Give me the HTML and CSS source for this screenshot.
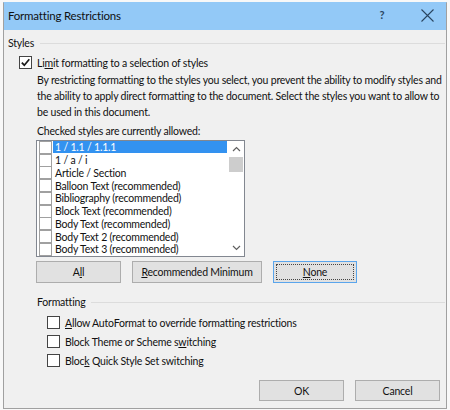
FILE: index.html
```html
<!DOCTYPE html>
<html lang="en">
<head>
  <meta charset="UTF-8">
  <title>Formatting Restrictions</title>
  <link rel="stylesheet" href="styles.css">
</head>
<body>

  <div class="window">
    <div class="titlebar">
      <span class="title">Formatting Restrictions</span>
      <span class="help">?</span>
      <span class="close">
        <svg width="13" height="13" viewBox="0 0 13 13"><path d="M0.5 0.5 L12.5 12.5 M12.5 0.5 L0.5 12.5" stroke="#2a4560" stroke-width="1.1" fill="none"/></svg>
      </span>
    </div>

    <div class="content">
      <div class="group-head">Styles</div>

      <label class="check-row limit">
        <span class="box">
          <svg width="11" height="11" viewBox="0 0 11 11"><path d="M1.8 5.6 L4.3 8.2 L9.3 2.2" stroke="#1a1a1a" stroke-width="1.7" fill="none"/></svg>
        </span>
        <span>Li<u>m</u>it formatting to a selection of styles</span>
      </label>

      <p class="desc">By restricting formatting to the styles you select, you prevent the ability to modify styles and
        the ability to apply direct formatting to the document. Select the styles you want to allow to
        be used in this document.</p>

      <div class="list-label">Checked styles are currently allowed:</div>

      <div class="listbox">
        <div class="rows">
          <div class="row selected"><span class="box"></span><span class="name">1 / 1.1 / 1.1.1</span></div>
          <div class="row"><span class="box"></span><span class="name">1 / a / i</span></div>
          <div class="row"><span class="box"></span><span class="name">Article / Section</span></div>
          <div class="row"><span class="box"></span><span class="name">Balloon Text (recommended)</span></div>
          <div class="row"><span class="box"></span><span class="name">Bibliography (recommended)</span></div>
          <div class="row"><span class="box"></span><span class="name">Block Text (recommended)</span></div>
          <div class="row"><span class="box"></span><span class="name">Body Text (recommended)</span></div>
          <div class="row"><span class="box"></span><span class="name">Body Text 2 (recommended)</span></div>
          <div class="row"><span class="box"></span><span class="name">Body Text 3 (recommended)</span></div>
        </div>
        <div class="scrollbar">
          <div class="arrow-btn">
            <svg width="9" height="6" viewBox="0 0 9 6"><path d="M1 5 L4.5 1.5 L8 5" stroke="#606060" stroke-width="1.2" fill="none"/></svg>
          </div>
          <div class="thumb"></div>
          <div class="track"></div>
          <div class="arrow-btn">
            <svg width="9" height="6" viewBox="0 0 9 6"><path d="M1 1 L4.5 4.5 L8 1" stroke="#606060" stroke-width="1.2" fill="none"/></svg>
          </div>
        </div>
      </div>

      <div class="list-buttons">
        <button class="btn all">A<u>l</u>l</button>
        <button class="btn rec"><u>R</u>ecommended Minimum</button>
        <button class="btn none"><span class="focus"><u>N</u>one</span></button>
      </div>

      <div class="group-head sub">Formatting</div>

      <div class="options">
        <label class="check-row"><span class="box"></span><span><u>A</u>llow AutoFormat to override formatting restrictions</span></label>
        <label class="check-row"><span class="box"></span><span>Block Theme or Scheme s<u>w</u>itching</span></label>
        <label class="check-row"><span class="box"></span><span>Bloc<u>k</u> Quick Style Set switching</span></label>
      </div>

      <div class="footer">
        <button class="btn big">OK</button>
        <button class="btn big">Cancel</button>
      </div>
    </div>
  </div>

</body>
</html>
```

FILE: styles.css
```css
:root {
  --title-blue: #93c9f7;
  --dialog-bg: #f0f0f0;
  --btn-bg: #e1e1e1;
  --btn-border: #adadad;
  --line: #dcdcdc;
  --text: #111;
  --select: #3392f0;
}

body {
  margin: 0;
  background: #f8f8f8;
  font-family: 'Lato', 'Noto Sans', sans-serif;
  font-size: 10.5px;
  letter-spacing: -0.2px;
  line-height: 14px;
  color: var(--text);
}

u {
  text-underline-offset: 1px;
}

.window {
  margin: 2px 0 0 3px;
  width: 442px;
  height: 405px;
  border: 1px solid #a0a0a0;
  border-top-color: var(--title-blue);
  background: var(--dialog-bg);
  display: flex;
  flex-direction: column;
}

.titlebar {
  flex: none;
  height: 27px;
  background: var(--title-blue);
  display: flex;
  align-items: center;
  padding-left: 4px;
}
.title {
  flex: 1;
  font-size: 11.5px;
  padding-bottom: 1px;
  color: #101010;
}
.help {
  width: 52px;
  text-align: center;
  font-weight: bold;
  font-size: 11px;
  color: #2a4560;
  padding-bottom: 3px;
}
.close {
  width: 38px;
  display: flex;
  justify-content: center;
  padding-bottom: 3px;
}

.content {
  padding: 6px 0 0 4px;
  display: flex;
  flex-direction: column;
}

.group-head {
  display: flex;
  align-items: center;
  gap: 6px;
  height: 14px;
}
.group-head::after {
  content: "";
  flex: 1;
  border-top: 1px solid var(--line);
  margin-right: 1px;
}
.group-head.sub {
  margin: 12px 0 0 29px;
}

.box {
  width: 11px;
  height: 11px;
  border: 1px solid #444;
  background: #fff;
  display: flex;
  align-items: center;
  justify-content: center;
  flex: none;
}

.check-row {
  display: flex;
  align-items: center;
  gap: 5px;
  height: 19px;
}
.check-row.limit {
  margin: 3px 0 0 11px;
}

.desc {
  margin: 0 0 0 29px;
  line-height: 16px;
  width: 408px;
}

.list-label {
  margin: 3px 0 0 29px;
  line-height: 16px;
}

.listbox {
  margin: 1px 0 0 28px;
  width: 207px;
  height: 115px;
  border: 1px solid #828790;
  background: #fff;
  display: flex;
}
.rows {
  flex: 1;
  overflow: hidden;
}
.row {
  display: flex;
  align-items: center;
  height: 12.75px;
  line-height: 12px;
  padding-left: 2px;
  white-space: nowrap;
}
.row .box {
  border-color: #a0a0a0;
}
.row .name {
  padding-left: 2px;
  margin-left: 1px;
}
.row.selected .name {
  background: var(--select);
  color: #fff;
  flex: 1;
  margin-right: 1px;
  height: 12px;
}
.scrollbar {
  width: 16px;
  display: flex;
  flex-direction: column;
}
.arrow-btn {
  height: 16px;
  display: flex;
  align-items: center;
  justify-content: center;
}
.thumb {
  height: 15px;
  margin: 0 1px;
  background: #cdcdcd;
}
.track {
  flex: 1;
}

.btn {
  font-family: inherit;
  font-size: 10.5px;
  letter-spacing: -0.2px;
  color: var(--text);
  background: var(--btn-bg);
  border: 1px solid var(--btn-border);
  padding: 0;
  height: 22px;
  white-space: nowrap;
}

.list-buttons {
  display: flex;
  gap: 11px;
  margin: 4px 0 0 28px;
}
.btn.all {
  width: 85px;
}
.btn.rec {
  width: 130px;
}
.btn.none {
  width: 84px;
  border: 1px solid #5aa5ec;
  padding: 2px;
}
.btn.none .focus {
  display: block;
  height: 100%;
  box-sizing: border-box;
  border: 1px dotted #444;
  line-height: 14px;
}

.options {
  margin: 4px 0 0 39px;
  display: flex;
  flex-direction: column;
}

.footer {
  display: flex;
  justify-content: flex-end;
  gap: 11px;
  margin: 10px 6px 0 0;
}
.btn.big {
  width: 85px;
  height: 21px;
}
```
